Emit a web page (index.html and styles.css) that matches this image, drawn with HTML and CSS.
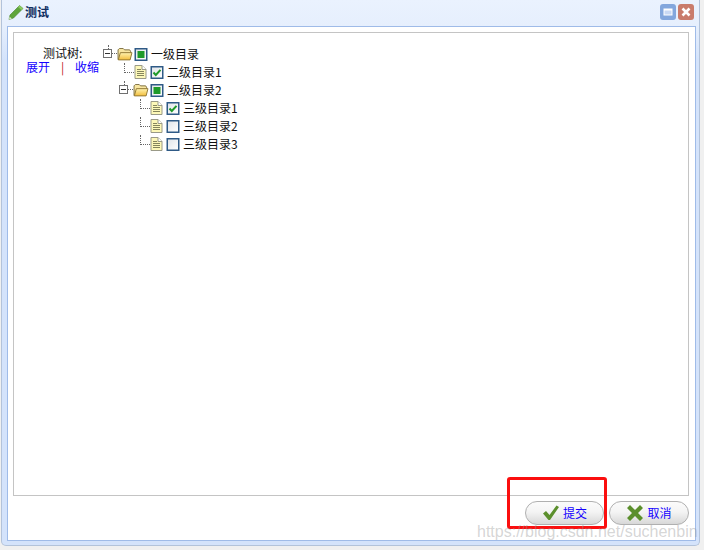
FILE: index.html
```html
<!DOCTYPE html>
<html lang="zh">
<head>
<meta charset="utf-8">
<title>测试</title>
<link rel="stylesheet" href="styles.css">
</head>
<body>
<svg class="defs" width="0" height="0">
  <defs>
    <linearGradient id="fold" x1="0" y1="0" x2="0" y2="1"><stop offset="0" stop-color="#fff3b0"/><stop offset="1" stop-color="#f2bd3c"/></linearGradient>
    <symbol id="folder" viewBox="0 0 16 14"><path d="M.5 12.500V2L2 .5h4L7.500 2H13l1 1.500V5" fill="#f8e6a0" stroke="#77683a"/><path d="M.8 12.800 3 5h12.500l-2 7.800z" fill="url(#fold)" stroke="#8d7430"/></symbol>
    <symbol id="leaf" viewBox="0 0 12 14"><path d="M.5.5h7l4 4v9H.5z" fill="#fdf8b8" stroke="#9a9a88"/><path d="M7.500.5v4h4" fill="#fff" stroke="#9a9a88"/><path d="M2.500 4.500h4M2.500 6.500h7M2.500 8.500h7M2.500 10.500h7" stroke="#85855c" fill="none"/></symbol>
    <linearGradient id="cb" x1="0" y1="0" x2="1" y2="1"><stop offset="0" stop-color="#dfe3e8"/><stop offset="1" stop-color="#fff"/></linearGradient>
    <symbol id="cb-none" viewBox="0 0 13 13"><rect x=".75" y=".75" width="11.500" height="11.500" fill="url(#cb)" stroke="#2f5a86" stroke-width="1.500"/></symbol>
    <symbol id="cb-part" viewBox="0 0 13 13"><rect x=".75" y=".75" width="11.500" height="11.500" fill="url(#cb)" stroke="#2f5a86" stroke-width="1.500"/><rect x="3" y="3" width="7" height="7" fill="#1f9a2a"/></symbol>
    <symbol id="cb-full" viewBox="0 0 13 13"><rect x=".75" y=".75" width="11.500" height="11.500" fill="url(#cb)" stroke="#2f5a86" stroke-width="1.500"/><path d="M3 6.500 5.300 9 10 3.800" fill="none" stroke="#1f9a2a" stroke-width="2"/></symbol>
  </defs>
</svg>
<div class="window">
  <header class="titlebar">
    <svg class="pencil" width="16" height="16" viewBox="0 0 16 16"><path d="M1 15.500 2 11 11.500 1.500 15 4.500 5.500 14z" fill="#5fa53c" stroke="#47812c" stroke-width=".6"/><path d="M11.500 1.500 15 4.500 13.500 6 10 3z" fill="#8ccb62"/><path d="M1 15.500 1.600 12.500 3.800 14.700z" fill="#d8e8c4"/></svg>
    <span class="title">测试</span>
    <span class="tool tool-max"><svg width="16" height="16" viewBox="0 0 16 16"><rect x="4" y="5" width="8" height="6" fill="#c9d9f4" stroke="#fff"/><rect x="4" y="5" width="8" height="1.500" fill="#fff"/></svg></span>
    <span class="tool tool-close"><svg width="16" height="16" viewBox="0 0 16 16"><path d="M4.500 4.500l7 7M11.500 4.500l-7 7" stroke="#fff" stroke-width="2.600"/></svg></span>
  </header>
  <div class="body">
    <main class="panel">
      <div class="field">
        <div class="label-col">
          <div class="field-label">测试树:</div>
          <div class="actions"><a class="link">展开</a><span class="sep">|</span><a class="link">收缩</a></div>
        </div>
        <ul class="tree">
          <li class="node">
            <span class="hit hit-root"><i class="exp"></i></span>
            <svg class="icon folder"><use href="#folder"/></svg>
            <svg class="check"><use href="#cb-part"/></svg>
            <span class="text">一级目录</span>
          </li>
          <li class="node">
            <span class="cell"></span>
            <span class="hit hit-leaf"></span>
            <svg class="icon page"><use href="#leaf"/></svg>
            <svg class="check"><use href="#cb-full"/></svg>
            <span class="text">二级目录1</span>
          </li>
          <li class="node">
            <span class="cell"></span>
            <span class="hit hit-sub"><i class="exp"></i></span>
            <svg class="icon folder"><use href="#folder"/></svg>
            <svg class="check"><use href="#cb-part"/></svg>
            <span class="text">二级目录2</span>
          </li>
          <li class="node">
            <span class="cell"></span><span class="cell"></span>
            <span class="hit hit-leaf"></span>
            <svg class="icon page"><use href="#leaf"/></svg>
            <svg class="check"><use href="#cb-full"/></svg>
            <span class="text">三级目录1</span>
          </li>
          <li class="node">
            <span class="cell"></span><span class="cell"></span>
            <span class="hit hit-leaf"></span>
            <svg class="icon page"><use href="#leaf"/></svg>
            <svg class="check"><use href="#cb-none"/></svg>
            <span class="text">三级目录2</span>
          </li>
          <li class="node">
            <span class="cell"></span><span class="cell"></span>
            <span class="hit hit-leaf"></span>
            <svg class="icon page"><use href="#leaf"/></svg>
            <svg class="check"><use href="#cb-none"/></svg>
            <span class="text">三级目录3</span>
          </li>
        </ul>
      </div>
    </main>
    <footer class="buttons">
      <button class="btn btn-ok" type="button">
        <svg width="18" height="18" viewBox="0 0 18 18"><path d="M1 9.500 4 7l3.500 4L14.500 1.500 17 3 8 16h-1.500z" fill="#5b8f2c"/></svg>
        <span>提交</span>
      </button>
      <button class="btn" type="button">
        <svg width="18" height="18" viewBox="0 0 18 18"><path d="M1 4 4 1l5 5 5-5 3 3-5 5 5 5-3 3-5-5-5 5-3-3 5-5z" fill="#5b8f2c"/></svg>
        <span>取消</span>
      </button>
    </footer>
  </div>
</div>
<div class="mark"></div>
<div class="watermark">https://blog.csdn.net/suchenbin</div>
</body>
</html>
```
FILE: styles.css
```css
* { box-sizing: border-box; }
html, body { margin: 0; height: 550px; overflow: hidden; }
body {
  position: relative;
  background: #f0f0f0;
  font: 12px/18px "Noto Sans CJK SC", "Liberation Sans", sans-serif;
  color: #111;
}
.defs { position: absolute; }
.window {
  width: 699px;
  height: 546px;
  margin-left: 1px;
  padding: 0 3px 4px 5px;
  border: 1px solid #b3c3da;
  border-top: 0;
  border-radius: 0 0 5px 5px;
  display: flex;
  flex-direction: column;
  background: linear-gradient(#eaf2fe 0, #e6effd 26px, #d4e3fb 60px);
}
.titlebar {
  height: 26px;
  flex: none;
  display: flex;
  align-items: center;
  padding: 0 2px 2px 1px;
  gap: 2px;
}
.pencil { flex: none; margin-right: -1px; }
.title { font-weight: 700; color: #0e2d5f; flex: 1; line-height: 16px; }
.tool {
  width: 16px;
  height: 16px;
  border-radius: 3px;
  flex: none;
  display: block;
}
.tool svg { display: block; }
.tool-max { background: #83a7dd; }
.tool-close { background: #c97c6c; }
.body {
  flex: 1;
  min-height: 0;
  background: #fff;
  border: 1px solid #9fbbe8;
  padding: 5px 6px 0 5px;
  display: flex;
  flex-direction: column;
}
.panel {
  height: 464px;
  flex: none;
  border: 1px solid #c4c4c4;
  padding: 12px 0 0 0;
}
.field { display: flex; }
.label-col { width: 86px; flex: none; padding-left: 12px; }
.field-label { padding-left: 17px; line-height: 16px; }
.actions { display: flex; line-height: 12px; }
.link { color: #1400ff; width: 24px; }
.sep { color: #c02020; width: 25px; text-align: center; }
.tree { list-style: none; margin: 0; padding: 0; }
.node { display: flex; height: 18px; align-items: center; }
.cell { width: 16px; height: 18px; flex: none; }
.hit { width: 16px; height: 18px; flex: none; position: relative; display: block; }
.exp {
  position: absolute;
  left: 3px;
  top: 4px;
  width: 9px;
  height: 9px;
  background: #fff;
  border: 1px solid #707070;
}
.exp::before {
  content: "";
  position: absolute;
  left: 1px;
  right: 1px;
  top: 3px;
  height: 1px;
  background: #333;
}
.hit-root::before, .hit-sub::before {
  content: "";
  position: absolute;
  left: 8px;
  top: 0;
  height: 4px;
  border-left: 1px dotted #666;
}
.hit-root::after, .hit-sub::after {
  content: "";
  position: absolute;
  left: 12px;
  top: 8px;
  width: 5px;
  border-top: 1px dotted #666;
}
.hit-leaf::before {
  content: "";
  position: absolute;
  left: 8px;
  top: 0;
  width: 9px;
  height: 9px;
  border-left: 1px dotted #666;
  border-bottom: 1px dotted #666;
}
.icon { flex: none; width: 17px; height: 14px; }
.folder { width: 16px; height: 13px; margin-left: 1px; }
.page { width: 17px; height: 14px; }
.check { flex: none; width: 16px; height: 13px; }
.text { padding-left: 2px; white-space: nowrap; }
.buttons {
  display: flex;
  justify-content: flex-end;
  gap: 5px;
  padding-top: 5px;
}
.btn {
  width: 80px;
  height: 24px;
  padding: 0;
  border: 1px solid #b0b0b0;
  border-radius: 12px;
  background: linear-gradient(#fbfbfb, #f4f4f4 45%, #d8d8d8);
  color: #1400ff;
  font: inherit;
  display: flex;
  align-items: center;
  justify-content: center;
  gap: 3px;
}
.btn-ok { width: 79px; }
.mark {
  position: absolute;
  left: 507px;
  top: 477px;
  width: 100px;
  height: 52px;
  border: 3px solid #fb0f0f;
  border-radius: 3px;
}
.watermark {
  position: absolute;
  left: 477px;
  top: 522px;
  font: 16px/20px "Liberation Sans", sans-serif;
  color: rgba(150, 150, 150, .4);
  white-space: nowrap;
}
```
